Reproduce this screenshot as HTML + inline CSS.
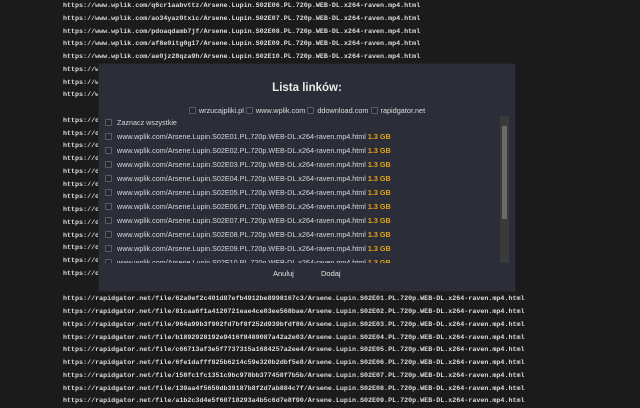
<!DOCTYPE html>
<html><head><meta charset="utf-8"><style>
*{margin:0;padding:0;box-sizing:border-box}
html,body{width:640px;height:400px;overflow:hidden;background:#1b1b1b}
.bg{position:absolute;left:63px;top:0;font-family:"Liberation Mono",monospace;font-size:6.7px;font-weight:bold;color:#dcdcdc;white-space:pre;line-height:12.75px}
.modal{position:absolute;left:98px;top:63px;width:418px;height:229px;background:#2b2e38;border:1px solid #222}
.t{position:absolute;font-family:"Liberation Sans",sans-serif;color:#ddd;white-space:nowrap}
h1{position:absolute;left:0;width:100%;top:18px;text-align:center;font:bold 11.5px "Liberation Sans",sans-serif;color:#e8e8e8}
.cb{display:inline-block;width:7px;height:7px;border:1px solid #5a5d66;border-radius:1.5px;background:#262830;vertical-align:-1px;margin-right:3px}
.hosts{top:42px;left:0;width:100%;text-align:center;font-size:7.3px}
.list{position:absolute;left:6px;top:52px;width:400px;height:147px;overflow:hidden}
.row{position:absolute;left:0;font-family:"Liberation Sans",sans-serif;font-size:7.2px;color:#d8d8d8;white-space:nowrap}
.row .cb{margin-right:5px}
.gb{color:#e8a317;font-weight:bold}
.sb{position:absolute;left:401px;top:52px;width:9px;height:147px;background:#3a3a3a}
.th{position:absolute;left:2px;top:10px;width:5px;height:93px;background:#6a6a6a}
.btn{top:205px;font-size:7.5px;color:#e0e0e0}
</style></head><body>
<div class="bg">https://www.wplik.com/q6cr1aabvttz/Arsene.Lupin.S02E06.PL.720p.WEB-DL.x264-raven.mp4.html
https://www.wplik.com/ao34yaz0txic/Arsene.Lupin.S02E07.PL.720p.WEB-DL.x264-raven.mp4.html
https://www.wplik.com/pdoaqdamb7jf/Arsene.Lupin.S02E08.PL.720p.WEB-DL.x264-raven.mp4.html
https://www.wplik.com/af8e0itg0g17/Arsene.Lupin.S02E09.PL.720p.WEB-DL.x264-raven.mp4.html
https://www.wplik.com/ae0jz28qza9h/Arsene.Lupin.S02E10.PL.720p.WEB-DL.x264-raven.mp4.html
https://www.wplik.com/
https://www.wplik.com/
https://www.wplik.com/

https://ddownload.com/
https://ddownload.com/
https://ddownload.com/
https://ddownload.com/
https://ddownload.com/
https://ddownload.com/
https://ddownload.com/
https://ddownload.com/
https://ddownload.com/
https://ddownload.com/
https://ddownload.com/
https://ddownload.com/
https://ddownload.com/

https://rapidgator.net/file/62a0ef2c401d87efb4912be8998167c3/Arsene.Lupin.S02E01.PL.720p.WEB-DL.x264-raven.mp4.html
https://rapidgator.net/file/81caa6f1a4120721eae4ce03ee568bae/Arsene.Lupin.S02E02.PL.720p.WEB-DL.x264-raven.mp4.html
https://rapidgator.net/file/964a99b3f902fd7bf8f252d939bfdf86/Arsene.Lupin.S02E03.PL.720p.WEB-DL.x264-raven.mp4.html
https://rapidgator.net/file/b1892928192e9416f8489087a42a2e03/Arsene.Lupin.S02E04.PL.720p.WEB-DL.x264-raven.mp4.html
https://rapidgator.net/file/c66713af3e5f7737315a1684257a2ee4/Arsene.Lupin.S02E05.PL.720p.WEB-DL.x264-raven.mp4.html
https://rapidgator.net/file/6fe1dafff825b6214c59e320b2dbf5e8/Arsene.Lupin.S02E06.PL.720p.WEB-DL.x264-raven.mp4.html
https://rapidgator.net/file/158fc1fc1351c9bc978bb377458f7b5b/Arsene.Lupin.S02E07.PL.720p.WEB-DL.x264-raven.mp4.html
https://rapidgator.net/file/139aa4f5650db39187b8f2d7ab884c7f/Arsene.Lupin.S02E08.PL.720p.WEB-DL.x264-raven.mp4.html
https://rapidgator.net/file/a1b2c3d4e5f60718293a4b5c6d7e8f90/Arsene.Lupin.S02E09.PL.720p.WEB-DL.x264-raven.mp4.html</div>
<div class="modal">
<h1>Lista linków:</h1>
<div class="t hosts"><span class="cb"></span>wrzucajpliki.pl <span class="cb"></span>www.wplik.com <span class="cb"></span>ddownload.com <span class="cb"></span>rapidgator.net</div>
<div class="list">
<div class="row" style="top:2px"><span class="cb"></span>Zaznacz wszystkie</div>
<div class="row" style="top:16px"><span class="cb"></span>www.wplik.com/Arsene.Lupin.S02E01.PL.720p.WEB-DL.x264-raven.mp4.html <span class="gb">1.3 GB</span></div>
<div class="row" style="top:30px"><span class="cb"></span>www.wplik.com/Arsene.Lupin.S02E02.PL.720p.WEB-DL.x264-raven.mp4.html <span class="gb">1.3 GB</span></div>
<div class="row" style="top:44px"><span class="cb"></span>www.wplik.com/Arsene.Lupin.S02E03.PL.720p.WEB-DL.x264-raven.mp4.html <span class="gb">1.3 GB</span></div>
<div class="row" style="top:58px"><span class="cb"></span>www.wplik.com/Arsene.Lupin.S02E04.PL.720p.WEB-DL.x264-raven.mp4.html <span class="gb">1.3 GB</span></div>
<div class="row" style="top:72px"><span class="cb"></span>www.wplik.com/Arsene.Lupin.S02E05.PL.720p.WEB-DL.x264-raven.mp4.html <span class="gb">1.3 GB</span></div>
<div class="row" style="top:86px"><span class="cb"></span>www.wplik.com/Arsene.Lupin.S02E06.PL.720p.WEB-DL.x264-raven.mp4.html <span class="gb">1.3 GB</span></div>
<div class="row" style="top:100px"><span class="cb"></span>www.wplik.com/Arsene.Lupin.S02E07.PL.720p.WEB-DL.x264-raven.mp4.html <span class="gb">1.3 GB</span></div>
<div class="row" style="top:114px"><span class="cb"></span>www.wplik.com/Arsene.Lupin.S02E08.PL.720p.WEB-DL.x264-raven.mp4.html <span class="gb">1.3 GB</span></div>
<div class="row" style="top:128px"><span class="cb"></span>www.wplik.com/Arsene.Lupin.S02E09.PL.720p.WEB-DL.x264-raven.mp4.html <span class="gb">1.3 GB</span></div>
<div class="row" style="top:142px"><span class="cb"></span>www.wplik.com/Arsene.Lupin.S02E10.PL.720p.WEB-DL.x264-raven.mp4.html <span class="gb">1.3 GB</span></div>
</div>
<div class="sb"><div class="th"></div></div>
<div class="t btn" style="left:174px">Anuluj</div>
<div class="t btn" style="left:222px">Dodaj</div>
</div>
</body></html>
